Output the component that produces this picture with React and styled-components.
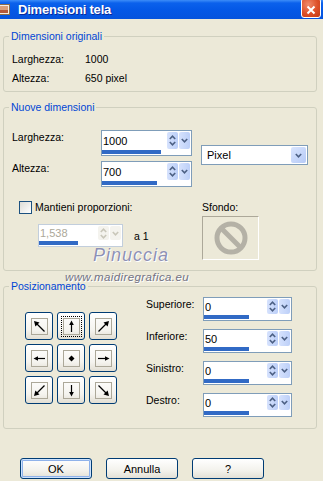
import React from "react";
import styled, { createGlobalStyle } from "styled-components";

const GlobalStyle = createGlobalStyle`
  html, body {
    margin: 0;
    padding: 0;
    background: #ece9d8;
  }
  body {
    font-family: "Liberation Sans", Arial, sans-serif;
    font-size: 10.5px;
    color: #000;
  }
  * {
    box-sizing: border-box;
  }
`;

const Window = styled.div`
  position: relative;
  width: 323px;
  height: 481px;
  overflow: hidden;
  background: #ece9d8;
  display: flex;
  flex-direction: column;
`;

const TitleBar = styled.div`
  height: 19px;
  flex: none;
  display: flex;
  align-items: center;
  background: linear-gradient(
    to bottom,
    #3d8df8 0px,
    #0b61ec 3px,
    #0458e6 10px,
    #0553dd 19px
  );
  color: #fff;
`;

const TitleIcon = styled.svg`
  width: 13px;
  height: 13px;
  margin-left: -3px;
  margin-right: 8px;
  flex: none;
`;

const TitleText = styled.span`
  flex: 1;
  font-weight: bold;
  font-size: 13px;
  letter-spacing: -0.2px;
  text-shadow: 1px 1px 0 #0a2a9a;
`;

const CloseButton = styled.div`
  width: 20px;
  height: 20px;
  margin: -3px 2px 0 0;
  border: 1px solid #fff;
  border-radius: 3px;
  background: radial-gradient(circle at 35% 30%, #f08a6a, #dd4f28 55%, #c13a16);
  display: flex;
  align-items: center;
  justify-content: center;
  padding-top: 3px;
`;

const Body = styled.div`
  flex: 1;
  display: flex;
  flex-direction: column;
  padding: 11px 6px 0 3px;
`;

const Group = styled.fieldset`
  margin: ${(p) => p.$top || 0}px 0 0 0;
  padding: 0;
  border: 1px solid #d0d0bf;
  border-radius: 3px;
  min-width: 0;
`;

const Legend = styled.legend`
  margin-left: 5px;
  padding: 0 2px;
  color: #0046d5;
  line-height: 13px;
`;

const InfoList = styled.div`
  display: grid;
  grid-template-columns: 73px auto;
  grid-auto-rows: 19px;
  align-items: center;
  padding: 6px 0 4px 8px;
`;

const SizeGrid = styled.div`
  display: grid;
  grid-template-columns: 89px 100px 107px;
  grid-template-rows: 26px 26px;
  row-gap: 5px;
  padding: 16px 0 0 8px;
`;

const FieldLabel = styled.div`
  align-self: start;
  line-height: 13px;
  padding-top: 1px;
`;

const UnitCell = styled.div`
  grid-column: 3;
  grid-row: 1 / span 2;
  align-self: start;
  margin-top: 15px;
`;

const SpinBox = styled.div`
  width: ${(p) => p.$w}px;
  height: ${(p) => p.$h}px;
  border: 1px solid ${(p) => (p.$disabled ? "#c2cedc" : "#7f9db9")};
  background: #fff;
  display: flex;
  flex-direction: column;
`;

const SpinField = styled.div`
  flex: 1;
  display: flex;
  padding: 1px 1px 0 0;
`;

const SpinText = styled.div`
  flex: 1;
  display: flex;
  align-items: center;
  padding-left: 1px;
  font-size: 11px;
  color: ${(p) => (p.$disabled ? "#aca899" : "#000")};
`;

const SpinArrows = styled.div`
  width: 11px;
  display: flex;
  flex-direction: column;
  align-items: center;
  justify-content: center;
  gap: 1px;
  border-radius: 2px;
  background: ${(p) =>
    p.$disabled
      ? "#f4f3ee"
      : "linear-gradient(to right, #d6e2fd, #bccff8)"};
`;

const DropArrow = styled(SpinArrows)`
  margin-left: 1px;
`;

const SpinBar = styled.div`
  height: 4px;
  margin: 1px 1px 1px 0;
  background: #fff;
  display: flex;
`;

const BarFill = styled.div`
  height: 100%;
  background: #316ac5;
`;

const SelectBox = styled.div`
  width: 107px;
  height: 20px;
  border: 1px solid #7f9db9;
  background: #fff;
  display: flex;
  padding: 1px;
`;

const SelectText = styled.div`
  flex: 1;
  display: flex;
  align-items: center;
  padding-left: 4px;
  font-size: 11px;
`;

const SelectButton = styled.div`
  width: 15px;
  border-radius: 2px;
  background: linear-gradient(135deg, #d9e5fe, #b6caf6);
  display: flex;
  align-items: center;
  justify-content: center;
`;

const LowerArea = styled.div`
  display: flex;
  padding: 14px 0 10px 15px;
`;

const ProportionColumn = styled.div`
  width: 183px;
  display: flex;
  flex-direction: column;
`;

const CheckRow = styled.label`
  display: flex;
  align-items: center;
  gap: 3px;
  height: 13px;
  line-height: 13px;
`;

const CheckBox = styled.span`
  width: 13px;
  height: 13px;
  border: 1px solid #1c5180;
  background: linear-gradient(135deg, #dcdcd6, #fff);
  flex: none;
`;

const RatioRow = styled.div`
  display: flex;
  align-items: center;
  gap: 11px;
  margin-top: 10px;
  padding-left: 19px;
`;

const BackgroundColumn = styled.div`
  display: flex;
  flex-direction: column;
`;

const BackgroundLabel = styled.div`
  line-height: 13px;
`;

const BackgroundSwatch = styled.div`
  width: 57px;
  height: 44px;
  margin-top: 2px;
  border-top: 1px solid #aca899;
  border-left: 1px solid #aca899;
  border-right: 1px solid #fff;
  border-bottom: 1px solid #fff;
  display: flex;
  align-items: center;
  justify-content: center;
`;

const PositionArea = styled.div`
  display: flex;
  padding: 4px 0 11px 21px;
`;

const ArrowGrid = styled.div`
  display: grid;
  grid-template-columns: repeat(3, 28px);
  grid-auto-rows: 28px;
  gap: 4px;
  margin-top: 15px;
  align-self: start;
`;

const PosButton = styled.div`
  border: 1px solid #003c74;
  border-radius: 3px;
  background: linear-gradient(#ffffff, #f5f4ef 65%, #e2ded3);
  display: flex;
  align-items: center;
  justify-content: center;
`;

const FocusRing = styled.div`
  padding: 1px;
  border: 1px dotted ${(p) => (p.$focus ? "#000" : "transparent")};
`;

const PosInner = styled.div`
  width: 17px;
  height: 17px;
  border: 1px solid #aca899;
  display: flex;
  align-items: center;
  justify-content: center;
`;

const MarginFields = styled.div`
  display: grid;
  grid-template-columns: 57px 89px;
  grid-auto-rows: 24px;
  row-gap: 8px;
  margin-left: 29px;
`;

const Footer = styled.div`
  display: flex;
  gap: 14px;
  margin-top: 29px;
  padding-left: 17px;
`;

const DialogButton = styled.button`
  width: 72px;
  height: 21px;
  padding: 0;
  border: 1px solid #003c74;
  border-radius: 3px;
  background: linear-gradient(#ffffff, #f3f2ec 60%, #e3e0d6);
  font-family: inherit;
  font-size: 11px;
  color: #000;
  box-shadow: ${(p) =>
    p.$default ? "inset 0 0 0 1px #cde2fd, inset 0 0 0 2px #8fb2ea" : "none"};
`;

const Watermark = styled.div`
  position: absolute;
  left: 65px;
  top: 245px;
  width: 124px;
  display: flex;
  flex-direction: column;
  align-items: center;
  pointer-events: none;
  font-style: italic;
`;

const WatermarkName = styled.div`
  font-size: 18px;
  letter-spacing: 1px;
  color: #8e91b4;
  text-shadow: 0 0 1px #fff, 1px 1px 0 #fff;
  margin-left: 8px;
`;

const WatermarkSite = styled.div`
  margin-top: 5px;
  font-size: 11.5px;
  letter-spacing: 0.4px;
  color: #727284;
  text-shadow: 1px 1px 0 #fff;
`;

const Chevron = ({ up, color }) => (
  <svg width="7" height="5" viewBox="0 0 7 5">
    <polyline
      points={up ? "0.8,4 3.5,1.2 6.2,4" : "0.8,1 3.5,3.8 6.2,1"}
      fill="none"
      stroke={color}
      strokeWidth="1.6"
    />
  </svg>
);

const Spinner = ({ value, fill, w, h, disabled }) => {
  const color = disabled ? "#c9c7ba" : "#4d6185";
  return (
    <SpinBox $w={w} $h={h} $disabled={disabled}>
      <SpinField>
        <SpinText $disabled={disabled}>{value}</SpinText>
        <SpinArrows $disabled={disabled}>
          <Chevron up color={color} />
          <Chevron color={color} />
        </SpinArrows>
        <DropArrow $disabled={disabled}>
          <Chevron color={color} />
        </DropArrow>
      </SpinField>
      <SpinBar>
        <BarFill style={{ width: `${fill}%` }} />
      </SpinBar>
    </SpinBox>
  );
};

const straight = { n: 0, e: 90, s: 180, w: 270 };
const diagonal = { ne: 0, se: 90, sw: 180, nw: 270 };

const ArrowIcon = ({ dir }) => {
  if (dir === "c") {
    return (
      <svg width="15" height="15" viewBox="0 0 15 15">
        <polygon points="7.5,4.5 10.5,7.5 7.5,10.5 4.5,7.5" fill="#000" />
      </svg>
    );
  }
  if (dir in straight) {
    return (
      <svg width="15" height="15" viewBox="0 0 15 15">
        <g transform={`rotate(${straight[dir]} 7.5 7.5)`}>
          <line x1="7.5" y1="13" x2="7.5" y2="4" stroke="#000" strokeWidth="1.2" />
          <polygon points="7.5,1.5 5.2,6 9.8,6" fill="#000" />
        </g>
      </svg>
    );
  }
  return (
    <svg width="15" height="15" viewBox="0 0 15 15">
      <g transform={`rotate(${diagonal[dir]} 7.5 7.5)`}>
        <line x1="2.5" y1="12.5" x2="11" y2="4" stroke="#000" strokeWidth="1.2" />
        <polygon points="13,2 7.5,3.4 11.6,7.5" fill="#000" />
      </g>
    </svg>
  );
};

const positions = ["nw", "n", "ne", "w", "c", "e", "sw", "s", "se"];

const margins = [
  { label: "Superiore:", value: "0" },
  { label: "Inferiore:", value: "50" },
  { label: "Sinistro:", value: "0" },
  { label: "Destro:", value: "0" },
];

const App = () => {
  return (
    <Window>
      <GlobalStyle />
      <TitleBar>
        <TitleIcon viewBox="0 0 13 13">
          <rect x="0.5" y="1.5" width="12" height="10" fill="#f4efe4" stroke="#8b6d4a" />
          <rect x="2" y="3" width="9" height="7" fill="#d9a07a" />
          <rect x="2" y="7" width="9" height="3" fill="#b5583a" />
        </TitleIcon>
        <TitleText>Dimensioni tela</TitleText>
        <CloseButton>
          <svg width="10" height="10" viewBox="0 0 10 10">
            <path d="M1.5 1.5 L8.5 8.5 M8.5 1.5 L1.5 8.5" stroke="#fff" strokeWidth="2" />
          </svg>
        </CloseButton>
      </TitleBar>

      <Body>
        <Group>
          <Legend>Dimensioni originali</Legend>
          <InfoList>
            <span>Larghezza:</span>
            <span>1000</span>
            <span>Altezza:</span>
            <span>650 pixel</span>
          </InfoList>
        </Group>

        <Group $top={9}>
          <Legend>Nuove dimensioni</Legend>
          <SizeGrid>
            <FieldLabel>Larghezza:</FieldLabel>
            <Spinner value="1000" fill={67} w={91} h={26} />
            <UnitCell>
              <SelectBox>
                <SelectText>Pixel</SelectText>
                <SelectButton>
                  <Chevron color="#4d6185" />
                </SelectButton>
              </SelectBox>
            </UnitCell>
            <FieldLabel>Altezza:</FieldLabel>
            <Spinner value="700" fill={63} w={91} h={26} />
          </SizeGrid>
          <LowerArea>
            <ProportionColumn>
              <CheckRow>
                <CheckBox />
                Mantieni proporzioni:
              </CheckRow>
              <RatioRow>
                <Spinner value="1,538" fill={47} w={85} h={23} disabled />
                <span>a 1</span>
              </RatioRow>
            </ProportionColumn>
            <BackgroundColumn>
              <BackgroundLabel>Sfondo:</BackgroundLabel>
              <BackgroundSwatch>
                <svg width="36" height="36" viewBox="0 0 36 36">
                  <circle cx="18" cy="18" r="14" fill="none" stroke="#b4b1a6" strokeWidth="5" />
                  <line x1="8.5" y1="8.5" x2="27.5" y2="27.5" stroke="#b4b1a6" strokeWidth="5" />
                </svg>
              </BackgroundSwatch>
            </BackgroundColumn>
          </LowerArea>
        </Group>

        <Group $top={9}>
          <Legend>Posizionamento</Legend>
          <PositionArea>
            <ArrowGrid>
              {positions.map((dir) => (
                <PosButton key={dir}>
                  <FocusRing $focus={dir === "n"}>
                    <PosInner>
                      <ArrowIcon dir={dir} />
                    </PosInner>
                  </FocusRing>
                </PosButton>
              ))}
            </ArrowGrid>
            <MarginFields>
              {margins.map((m) => (
                <React.Fragment key={m.label}>
                  <FieldLabel>{m.label}</FieldLabel>
                  <Spinner value={m.value} fill={52} w={89} h={24} />
                </React.Fragment>
              ))}
            </MarginFields>
          </PositionArea>
        </Group>

        <Footer>
          <DialogButton $default>OK</DialogButton>
          <DialogButton>Annulla</DialogButton>
          <DialogButton>?</DialogButton>
        </Footer>
      </Body>

      <Watermark>
        <WatermarkName>Pinuccia</WatermarkName>
        <WatermarkSite>www.maidiregrafica.eu</WatermarkSite>
      </Watermark>
    </Window>
  );
};

export default App;
